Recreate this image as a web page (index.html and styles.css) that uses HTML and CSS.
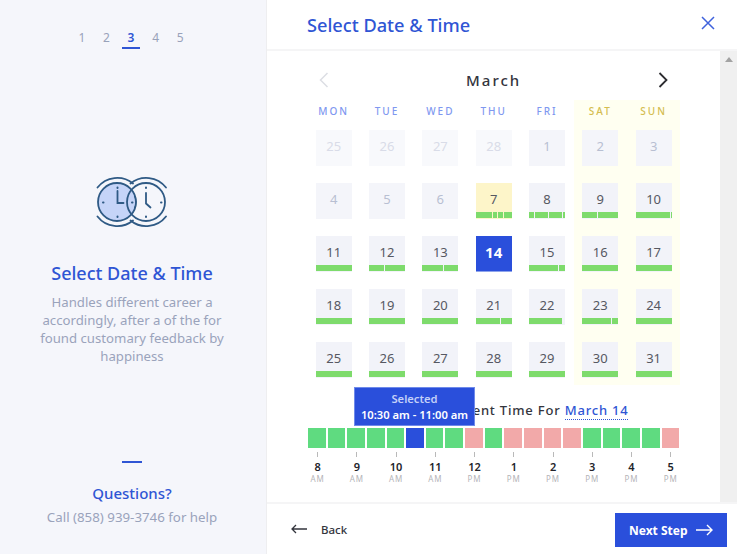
FILE: index.html
```html
<!DOCTYPE html>
<html lang="en">
<head>
    <meta charset="UTF-8">
    <meta name="viewport" content="width=device-width, initial-scale=1.0">
    <title>Select Date &amp; Time</title>
    <link rel="stylesheet" href="styles.css">
</head>
<body>
    <div class="wizard">
        <aside class="side">
            <div class="steps">
                <span>1</span><span>2</span><span class="active">3</span><span>4</span><span>5</span>
            </div>
            <svg class="clocks" width="75" height="54" viewBox="95 175 75 54" fill="none" stroke="#2f5a85" stroke-width="1.800" stroke-linecap="round">
                <circle cx="117" cy="201" r="19" fill="#c5d4f8"/>
                <path d="M97.500 186.500A25 25 0 0 1 133 182.500M97.500 215.500A25 25 0 0 0 133 219.500"/>
                <path d="M130.500 182.500A25 25 0 0 1 166 186.500M130.500 219.500A25 25 0 0 0 166 215.500"/>
                <path d="M117.500 190V202H123.500"/>
                <path d="M146 192V202.500L150.500 206.500"/>
                <circle cx="146" cy="201" r="19"/>
                <path d="M134.500 195Q137.500 201 134.500 207" stroke-width="1.200"/>
                <path d="M117.500 186.500v.5M117.500 215.500v.5M103 201.500h.5M132 201.500h.5M146 186.500v.5M146 215.500v.5M161 201.500h.5" stroke-width="2"/>
            </svg>
            <h2 class="side-title">Select Date &amp; Time</h2>
            <p class="side-text">Handles different career a accordingly, after a of the for found customary feedback by happiness</p>
            <div class="dash"></div>
            <h3 class="side-question">Questions?</h3>
            <p class="side-call">Call (858) 939-3746 for help</p>
        </aside>

        <main class="main">
            <header class="top">
                <h1>Select Date &amp; Time</h1>
                <svg width="14" height="14" viewBox="0 0 14 14" stroke="#3f62dc" stroke-width="1.500" fill="none"><path d="M1 1L13 13M13 1L1 13"/></svg>
            </header>

            <div class="middle">
                <div class="scroll-area">
                    <div class="month">
                        <svg width="10" height="16" viewBox="0 0 10 16" fill="none" stroke="#dcdee4" stroke-width="1.500"><path d="M8.500 1L1.500 8L8.500 15"/></svg>
                        <span>March</span>
                        <svg width="10" height="16" viewBox="0 0 10 16" fill="none" stroke="#2c2c30" stroke-width="1.800"><path d="M1.500 1L8.500 8L1.500 15"/></svg>
                    </div>

                    <div class="calendar" id="calendar"></div>

                    <div class="time-title">Select Appointment Time For <span>March 14</span></div>
                    <div class="slots" id="slots"></div>
                    <div class="hours" id="hours"></div>
                    <div class="tooltip">
                        <div class="tooltip-head">Selected</div>
                        <div>10:30 am - 11:00 am</div>
                    </div>
                </div>
                <div class="scrollbar"><i></i></div>
            </div>

            <footer class="bottom">
                <a class="back">
                    <svg width="16" height="10" viewBox="0 0 16 10" fill="none" stroke="#33353d" stroke-width="1.300"><path d="M16 5H1M5 1L1 5L5 9"/></svg>
                    Back
                </a>
                <button class="next">Next Step
                    <svg width="17" height="12" viewBox="0 0 17 12" fill="none" stroke="#fff" stroke-width="1.400"><path d="M0 6H16M11 1L16 6L11 11"/></svg>
                </button>
            </footer>
        </main>
    </div>
    <script>
        // [day, kind, segments]: segments are the widths of the green parts, split by a white line
        const days = [
            [25,"off"],[26,"off"],[27,"off"],[28,"off"],[1,"past"],[2,"past"],[3,"past"],
            [4,"past"],[5,"past"],[6,"past"],[7,"today",[16,4,5,7]],[8,"",[5,13,13,2]],[9,"",[15,20]],[10,"",[33,1]],
            [11,"",[36]],[12,"",[15,20]],[13,"",[21,14]],[14,"picked"],[15,"",[29,6]],[16,"",[36]],[17,"",[36]],
            [18,"",[36]],[19,"",[36]],[20,"",[36]],[21,"",[24,11]],[22,"short",[33]],[23,"",[29,6]],[24,"",[36]],
            [25,"",[36]],[26,"",[36]],[27,"",[36]],[28,"",[36]],[29,"",[36]],[30,"",[36]],[31,"",[36]]
        ];
        const names = ["MON","TUE","WED","THU","FRI","SAT","SUN"];
        const calendar = document.getElementById("calendar");

        names.forEach((name, i) => {
            const head = document.createElement("div");
            head.className = "day-name" + (i > 4 ? " weekend" : "");
            head.textContent = name;
            calendar.appendChild(head);
        });

        days.forEach((d, i) => {
            const slot = document.createElement("div");
            slot.className = "day-slot" + (i % 7 > 4 ? " weekend" : "") + (i > 27 ? " last" : "");
            const cell = document.createElement("div");
            cell.className = "day " + d[1];
            cell.innerHTML = "<b>" + d[0] + "</b>";
            if (d[2]) {
                const bar = document.createElement("div");
                bar.className = "bar";
                d[2].forEach(w => {
                    const seg = document.createElement("i");
                    seg.style.flexGrow = w;
                    bar.appendChild(seg);
                });
                if (d[1] === "short") bar.style.marginRight = "3px";
                cell.appendChild(bar);
            }
            slot.appendChild(cell);
            calendar.appendChild(slot);
        });

        const slots = "gggggbggrgrrrrggggr".split("");
        slots.forEach(s => {
            const el = document.createElement("div");
            el.className = "slot " + s;
            document.getElementById("slots").appendChild(el);
        });

        [[8,"AM"],[9,"AM"],[10,"AM"],[11,"AM"],[12,"PM"],[1,"PM"],[2,"PM"],[3,"PM"],[4,"PM"],[5,"PM"]].forEach(h => {
            const el = document.createElement("div");
            el.className = "hour";
            el.innerHTML = "<i></i><b>" + h[0] + "</b><small>" + h[1] + "</small>";
            document.getElementById("hours").appendChild(el);
        });
    </script>
</body>
</html>
```

FILE: styles.css
```css
body {
    font-family: "Noto Sans", "Open Sans", sans-serif;
    margin: 0;
    background-color: #fff;
    color: #33353d;
}
h1, h2, h3, p {
    margin: 0;
    font-weight: 500;
}
.wizard {
    display: flex;
    width: 737px;
    height: 554px;
    overflow: hidden;
}

/* left panel */
.side {
    width: 267px;
    flex-shrink: 0;
    box-sizing: border-box;
    height: 554px;
    padding-right: 2px;
    background-color: #f5f6fb;
    border-right: 1px solid #eeeef0;
    display: flex;
    flex-direction: column;
    align-items: center;
    text-align: center;
}
.steps {
    display: flex;
    margin-top: 29px;
    font-size: 12px;
    line-height: 18px;
    color: #99a2ba;
    margin-left: -2px;
}
.steps span {
    width: 24.600px;
    height: 20px;
    text-align: center;
}
.steps .active {
    color: #2f55d4;
    font-weight: 600;
    height: 18px;
    margin: 0 3.500px;
    width: 17.600px;
    border-bottom: 2px solid #2f55d4;
}
.clocks {
    margin-top: 127px;
}
.side-title {
    margin-top: 31px;
    font-size: 18px;
    line-height: 24px;
    color: #2f55d4;
}
.side-text {
    margin-top: 8px;
    width: 200px;
    font-size: 13.200px;
    line-height: 18px;
    font-weight: 400;
    color: #9aa3bb;
}
.dash {
    width: 20px;
    height: 2px;
    margin-top: 96px;
    background-color: #2f55d4;
}
.side-question {
    margin-top: 19px;
    font-size: 15px;
    line-height: 22px;
    color: #2f55d4;
}
.side-call {
    margin-top: 4px;
    font-size: 13.300px;
    line-height: 18px;
    font-weight: 400;
    color: #9aa3bb;
}

/* right panel */
.main {
    flex: 1;
    display: flex;
    flex-direction: column;
    min-width: 0;
}
.top {
    height: 49px;
    flex-shrink: 0;
    box-sizing: content-box;
    display: flex;
    align-items: center;
    justify-content: space-between;
    padding: 0 22px 0 40px;
    border-bottom: 2px solid #f5f5f6;
}
.top h1 {
    font-size: 18.200px;
    color: #2f55d4;
}
.top svg {
    margin-top: -3px;
}
.middle {
    flex: 1;
    display: flex;
    min-height: 0;
}
.scroll-area {
    flex: 1;
    position: relative;
    padding: 0 40px;
}
.scrollbar {
    width: 17px;
    background-color: #f0f0f0;
    position: relative;
}
.scrollbar i {
    display: block;
    width: 0;
    height: 0;
    margin: 6px auto 0;
    border: 4px solid transparent;
    border-top: 0;
    border-bottom: 5px solid #a3a3a3;
}
.month {
    height: 49px;
    display: flex;
    align-items: center;
    justify-content: space-between;
    padding: 9px 12px 0 12px;
    box-sizing: border-box;
    font-size: 15px;
    letter-spacing: 2px;
    color: #33353d;
    font-weight: 500;
}

/* calendar */
.calendar {
    display: grid;
    grid-template-columns: repeat(7, 53.330px);
}
.day-name {
    height: 30px;
    box-sizing: border-box;
    padding-top: 4px;
    font-size: 10px;
    line-height: 14px;
    letter-spacing: 2px;
    font-weight: 500;
    text-align: center;
    color: #7f98f0;
}
.day-name.weekend {
    color: #d4bd50;
}
.weekend {
    background-color: #fffff1;
}
.day-slot {
    padding-bottom: 17px;
    display: flex;
    justify-content: center;
}
.day-slot.last {
    padding-bottom: 7px;
}
.day {
    width: 36px;
    height: 36px;
    background-color: #f2f3f9;
    display: flex;
    flex-direction: column;
    position: relative;
    font-size: 13px;
    color: #565862;
    text-align: center;
}
.day b {
    font-weight: 400;
    flex: 1;
    min-height: 0;
    line-height: 33px;
}
.bar {
    display: flex;
    flex-shrink: 0;
    gap: 1px;
    height: 6px;
    margin-bottom: 1px;
}
.bar i {
    background-color: #7edb6c;
}
.day.off {
    background-color: #f8f9fc;
    color: #d9dce8;
}
.day.past {
    background-color: #f4f5fa;
    color: #b8bfd2;
}
.day.today {
    background-color: #fdf5c9;
}
.day.picked {
    background-color: #2a4fdb;
    border-bottom: 1px solid #8ea4ec;
    box-sizing: border-box;
    color: #fff;
    font-size: 15px;
}
.day.picked b {
    font-weight: 700;
}

/* time picker */
.time-title {
    margin-top: 15px;
    text-align: center;
    font-size: 13px;
    line-height: 20px;
    letter-spacing: 0.800px;
    font-weight: 500;
    color: #33353d;
    white-space: nowrap;
}
.time-title span {
    color: #2f55d4;
    border-bottom: 1px dotted #2f55d4;
}
.slots {
    display: flex;
    gap: 2px;
    margin-top: 7px;
    padding: 0 1px 0 1px;
}
.slot {
    flex: 1;
    height: 20px;
    border-top: 1px solid #fff;
}
.slot.g {
    background-color: #5fdb80;
}
.slot.r {
    background-color: #f2a9a9;
}
.slot.b {
    background-color: #2a4fdb;
}
.hours {
    display: flex;
    margin: 4px -10px 0 -9px;
}
.hour {
    flex: 1;
    display: flex;
    flex-direction: column;
    align-items: center;
}
.hour i {
    width: 1px;
    height: 5px;
    background-color: #b9b9b9;
}
.hour b {
    font-size: 11px;
    line-height: 14px;
    margin-top: 3px;
    color: #22232a;
    font-weight: 600;
}
.hour small {
    font-size: 8px;
    line-height: 10px;
    letter-spacing: 1px;
    color: #b4b4b8;
}
.tooltip {
    position: absolute;
    left: 87px;
    top: 336px;
    width: 119px;
    height: 34px;
    border: 1px solid #6f8aea;
    background-color: #2a4fdb;
    color: #fff;
    text-align: center;
    font-size: 11.200px;
    line-height: 16px;
    font-weight: 600;
    padding-top: 3px;
    box-sizing: content-box;
    white-space: nowrap;
}
.tooltip-head {
    color: #c3d0f8;
    font-weight: 600;
}

/* footer */
.bottom {
    height: 52px;
    flex-shrink: 0;
    box-sizing: border-box;
    border-top: 2px solid #f5f5f6;
    display: flex;
    align-items: center;
    justify-content: space-between;
    padding: 0 10px 0 24px;
}
.back {
    display: flex;
    align-items: center;
    gap: 14px;
    font-size: 11.500px;
    font-weight: 500;
    color: #33353d;
}
.next {
    font-family: inherit;
    width: 112px;
    height: 34px;
    border: none;
    background-color: #2a4fdb;
    color: #fff;
    font-size: 12px;
    font-weight: 700;
    display: flex;
    align-items: center;
    justify-content: space-between;
    padding: 0 14px 0 14px;
    margin-top: 2px;
}
```
